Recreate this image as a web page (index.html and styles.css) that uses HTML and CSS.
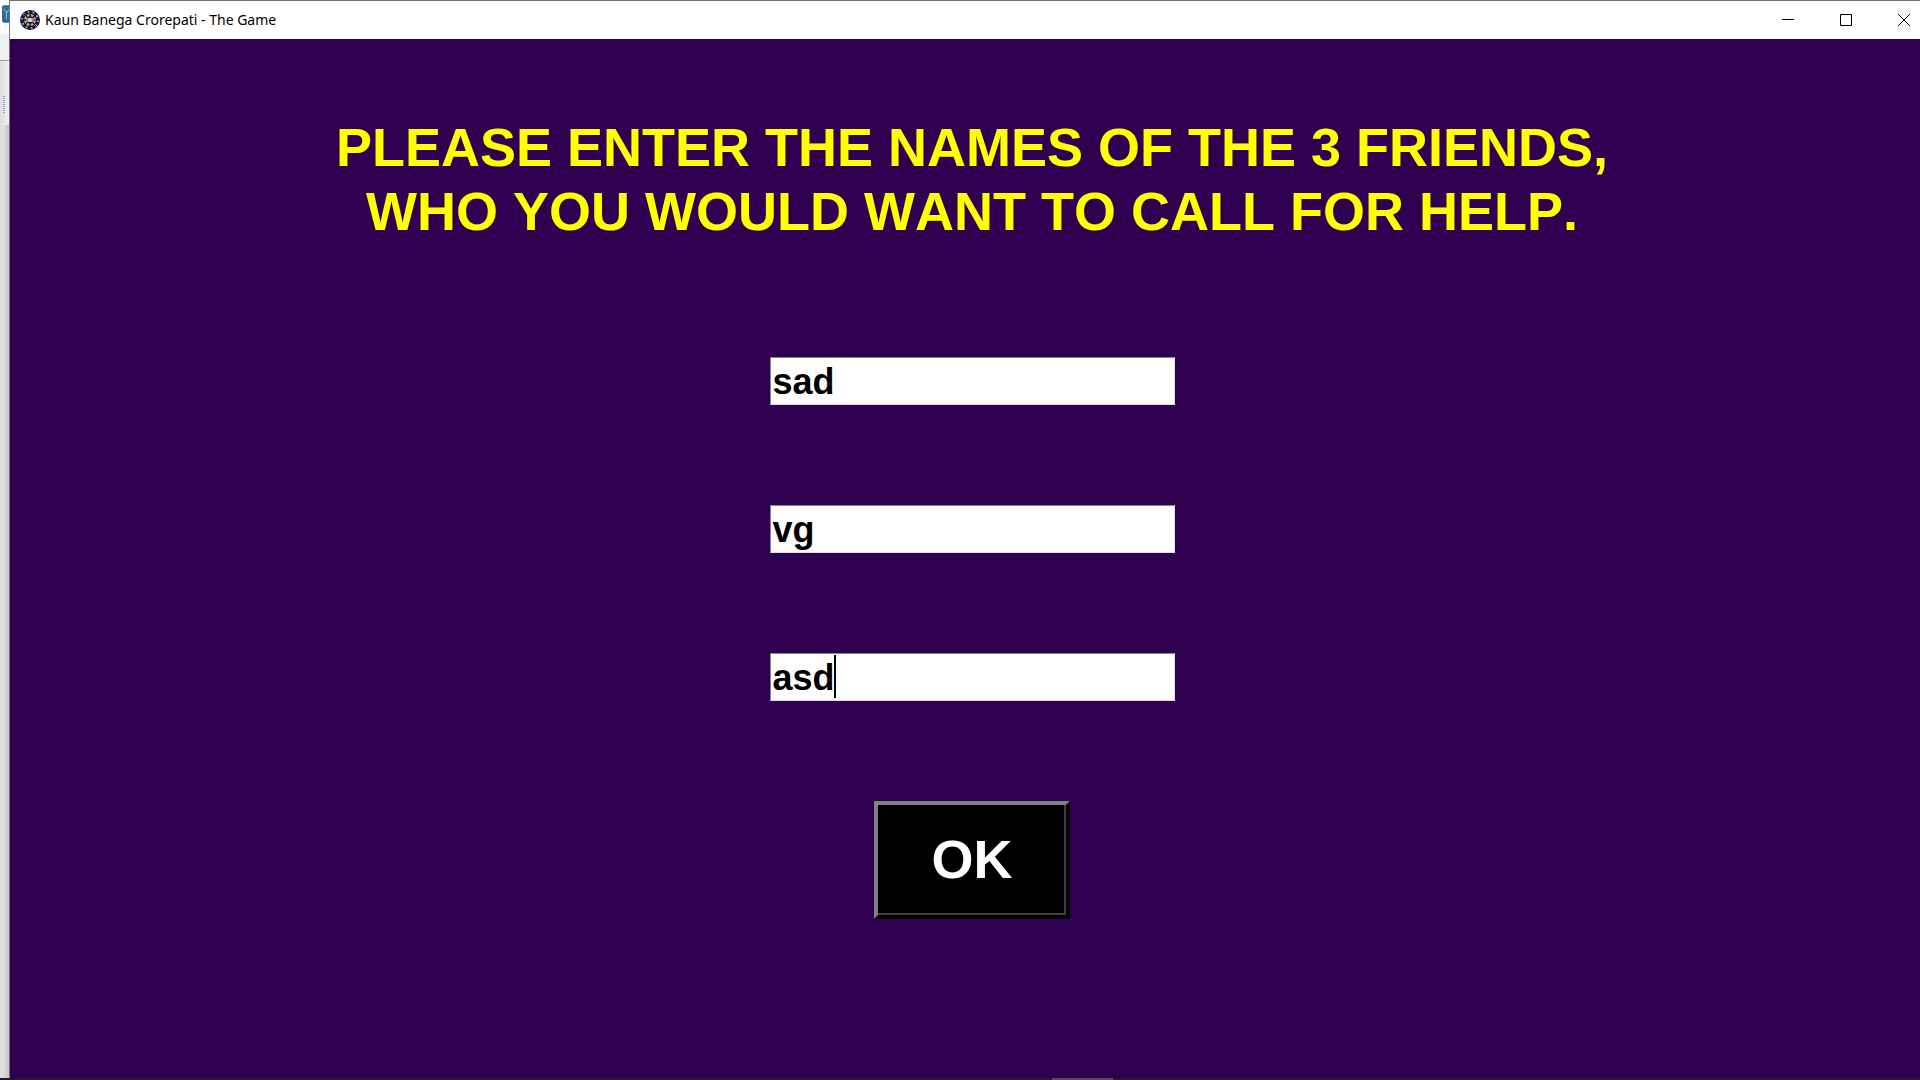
FILE: index.html
```html
<!DOCTYPE html>
<html lang="en">
<head>
<meta charset="utf-8">
<title>Kaun Banega Crorepati - The Game</title>
<link rel="stylesheet" href="styles.css">
</head>
<body>
<div class="desktop">
  <div class="backdrop" aria-hidden="true">
    <div class="backdrop-head">
      <svg class="backdrop-logo" viewBox="0 0 8 20"><rect width="12" height="20" rx="2" fill="#2c6c9c"/><path d="M2 4l3 4v8M8 5L5 9" fill="none" stroke="#a9cde4" stroke-width="1"/></svg>
    </div>
    <div class="backdrop-tools"><span class="grip"></span></div>
    <div class="backdrop-body"></div>
  </div>
  <div class="window">
    <header class="titlebar">
      <svg class="app-icon" viewBox="0 0 20 20" aria-hidden="true">
        <circle cx="10" cy="10" r="10" fill="#1d1042"/>
        <circle cx="10" cy="10" r="8" fill="none" stroke="#6fb4dc" stroke-width="2" stroke-dasharray="2 3"/>
        <circle cx="10" cy="10" r="5" fill="#2b3150" stroke="#e0a94a" stroke-width="2" stroke-dasharray="3 1"/>
        <path d="M10 1v18M1 10h18M4 4l12 12M16 4L4 16" stroke="#14103a" stroke-width="1"/>
        <path d="M6 9h8M6 11h8" stroke="#ffe49a" stroke-width="1"/>
        <circle cx="10" cy="10" r="2" fill="#d8dce0"/>
      </svg>
      <span class="title">Kaun Banega Crorepati - The Game</span>
      <button class="caption" type="button" aria-label="Minimize"><svg viewBox="0 0 12 12"><path d="M0 5.5h12"/></svg></button>
      <button class="caption" type="button" aria-label="Maximize"><svg viewBox="0 0 12 12"><path d="M.5.5h11v11H.5z"/></svg></button>
      <button class="caption" type="button" aria-label="Close"><svg viewBox="0 0 12 12"><path d="M0 0l12 12M12 0L0 12"/></svg></button>
    </header>
    <main class="content">
      <h1 class="heading">PLEASE ENTER THE NAMES OF THE 3 FRIENDS,<br>WHO YOU WOULD WANT TO CALL FOR HELP.</h1>
      <form class="friends">
        <input class="name" type="text" value="sad" aria-label="First friend">
        <input class="name" type="text" value="vg" aria-label="Second friend">
        <div class="active-field">
          <input class="name" type="text" value="asd" aria-label="Third friend">
          <span class="caret"></span>
        </div>
        <button class="ok" type="button">OK</button>
      </form>
    </main>
  </div>
</div>
<footer class="taskbar"><span class="taskbar-item"></span></footer>
</body>
</html>
```
FILE: styles.css
```css
* {
  box-sizing: border-box;
}

body {
  margin: 0;
  min-height: 100vh;
  display: flex;
  flex-direction: column;
  overflow: hidden;
  background: #2f004f;
  font-family: "Liberation Sans", Arial, sans-serif;
}

.desktop {
  flex: 1;
  display: flex;
}

.backdrop {
  width: 10px;
  display: flex;
  flex-direction: column;
  border-right: 1px solid #77777b;
  background: #e4e4e6;
}

.backdrop-head {
  height: 61px;
  padding: 4px 0 0 2px;
  border-bottom: 1px solid #9a9a9c;
  background: linear-gradient(#fff 50%, #f0f0f0 60%);
}

.backdrop-logo {
  display: block;
  width: 7px;
  height: 20px;
}

.backdrop-tools {
  height: 64px;
  padding: 35px 0 0 3px;
  background: linear-gradient(90deg, #dcdce2, #f0f0f2);
}

.grip {
  display: block;
  width: 2px;
  height: 17px;
  background: repeating-linear-gradient(#9ba6bd 0 1px, #e4e4ea 1px 2px);
}

.backdrop-body {
  flex: 1;
  background: linear-gradient(90deg, #dcdcde 0 4px, #c8c8ca 8px);
}

/* The window reaches past the right edge of the screen. */
.window {
  flex: 1;
  margin-right: -14px;
  display: flex;
  flex-direction: column;
}

.titlebar {
  height: 39px;
  display: flex;
  align-items: center;
  padding: 0 1px 0 10px;
  border-top: 1px solid #707070;
  background: #fff;
}

.app-icon {
  width: 20px;
  height: 20px;
}

.title {
  flex: 1;
  margin-left: 5px;
  font: 14px/20px "Noto Sans", sans-serif;
  color: #000;
}

.caption {
  width: 58px;
  height: 38px;
  display: grid;
  place-items: center;
  padding: 0;
  border: 0;
  background: none;
}

.caption svg {
  width: 12px;
  height: 12px;
  fill: none;
  stroke: #000;
  stroke-width: 1;
}

.content {
  flex: 1;
  padding-top: 76px;
  background: #2f004f;
}

.heading {
  margin: 0 0 114px;
  font-size: 54px;
  line-height: 64px;
  font-kerning: none;
  text-align: center;
  color: #ff0;
}

.friends {
  display: flex;
  flex-direction: column;
  align-items: center;
  gap: 100px;
}

.name {
  display: block;
  width: 405px;
  height: 48px;
  padding: 1px 2px 0;
  border: 1px solid;
  border-color: #848484 #e0e0e0 #e0e0e0 #848484;
  border-radius: 0;
  background: #fff;
  color: #000;
  font: bold 36px "Liberation Sans", Arial, sans-serif;
}

.active-field {
  position: relative;
}

.caret {
  position: absolute;
  left: 64px;
  top: 2px;
  width: 2px;
  height: 43px;
  background: #000;
}

.ok {
  width: 196px;
  height: 118px;
  padding: 0 0 2px;
  border: 4px solid;
  border-color: #808080 #000 #000 #808080;
  box-shadow: inset -2px -2px #404040;
  background: #000;
  color: #fff;
  font: bold 54px "Liberation Sans", Arial, sans-serif;
}

.taskbar {
  height: 2px;
  display: flex;
  background: #281a2c;
}

.taskbar-item {
  width: 61px;
  margin-left: 1052px;
  background: #5c4868;
}
```
